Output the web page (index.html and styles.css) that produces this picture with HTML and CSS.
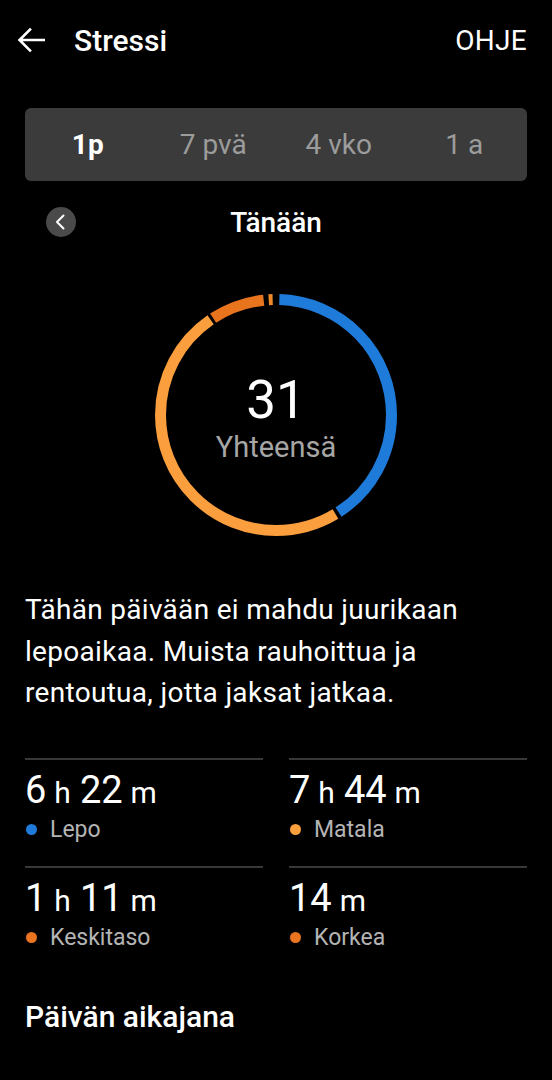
FILE: index.html
```html
<!DOCTYPE html>
<html lang="fi">
<head>
<meta charset="UTF-8" />
<meta name="viewport" content="width=device-width, initial-scale=1.0">
<title>Stressi</title>
<link rel="stylesheet" href="styles.css">
</head>
<body>
  <div class="topbar">
    <button class="back" aria-label="Takaisin">
      <svg width="28" height="26" viewBox="0 0 28 26">
        <path d="M27 13H3M13 2.5L2.5 13 13 23.5" fill="none" stroke="#fff" stroke-width="2.6" stroke-linecap="square"/>
      </svg>
    </button>
    <h1 class="title">Stressi</h1>
    <span class="help">OHJE</span>
  </div>

  <div class="tabs">
    <span class="tab active">1p</span>
    <span class="tab">7 pvä</span>
    <span class="tab">4 vko</span>
    <span class="tab">1 a</span>
  </div>

  <div class="daterow">
    <button class="prev" aria-label="Edellinen">
      <svg width="30" height="30" viewBox="0 0 30 30">
        <path d="M17.5 8.5L11 15l6.5 6.5" fill="none" stroke="#fff" stroke-width="2" stroke-linecap="round" stroke-linejoin="round"/>
      </svg>
    </button>
    <span class="date">Tänään</span>
  </div>

  <div class="ring">
    <svg width="252" height="252" viewBox="0 0 252 252">
      <g transform="rotate(-90 126 126)" fill="none" stroke-width="11">
        <!-- angles from top, clockwise -->
        <circle cx="126" cy="126" r="115.5" pathLength="360" stroke="#1f7bd9" stroke-dasharray="145.5 360" stroke-dashoffset="-1.7"/>
        <circle cx="126" cy="126" r="115.5" pathLength="360" stroke="#fb9e3d" stroke-dasharray="176.5 360" stroke-dashoffset="-149"/>
        <circle cx="126" cy="126" r="115.5" pathLength="360" stroke="#e9741e" stroke-dasharray="26.8 360" stroke-dashoffset="-327"/>
        <circle cx="126" cy="126" r="115.5" pathLength="360" stroke="#ef8a2a" stroke-dasharray="2 360" stroke-dashoffset="-356.3"/>
      </g>
    </svg>
    <div class="ring-label">
      <span class="total">31</span>
      <span class="total-name">Yhteensä</span>
    </div>
  </div>

  <p class="advice">Tähän päivään ei mahdu juurikaan lepoaikaa. Muista rauhoittua ja rentoutua, jotta jaksat jatkaa.</p>

  <div class="stats">
    <div class="stat">
      <div class="value">6<small>h</small>22<small>m</small></div>
      <div class="label"><i class="dot rest"></i>Lepo</div>
    </div>
    <div class="stat">
      <div class="value">7<small>h</small>44<small>m</small></div>
      <div class="label"><i class="dot low"></i>Matala</div>
    </div>
    <div class="stat">
      <div class="value">1<small>h</small>11<small>m</small></div>
      <div class="label"><i class="dot mid"></i>Keskitaso</div>
    </div>
    <div class="stat">
      <div class="value">14<small>m</small></div>
      <div class="label"><i class="dot mid"></i>Korkea</div>
    </div>
  </div>

  <h2 class="section">Päivän aikajana</h2>
</body>
</html>
```

FILE: styles.css
```css
body {
  margin: 0;
  background: #000;
  color: #fff;
  font-family: Roboto, "Noto Sans", sans-serif;
}
button {
  background: none;
  border: none;
  padding: 0;
  cursor: pointer;
}

.topbar {
  display: flex;
  align-items: center;
  height: 80px;
  padding: 0 25px 0 17px;
}
.back {
  display: flex;
  width: 28px;
  height: 26px;
}
.title {
  margin: 0 0 0 29px;
  font-size: 30px;
  font-weight: 500;
  flex: 1;
}
.help {
  font-size: 28px;
  letter-spacing: 0.3px;
}

.tabs {
  display: grid;
  grid-template-columns: repeat(4, 1fr);
  align-items: center;
  height: 73px;
  margin: 28px 25px 0;
  background: #3b3b3b;
  border-radius: 6px;
}
.tab {
  text-align: center;
  font-size: 28px;
  color: #9c9c9c;
}
.tab.active {
  color: #fff;
  font-weight: 700;
}

.daterow {
  display: grid;
  grid-template-columns: 1fr auto 1fr;
  align-items: center;
  height: 54px;
  margin: 14px 25px 0;
}
.prev {
  width: 30px;
  height: 30px;
  margin-left: 21px;
  border-radius: 50%;
  background: #4a4a4a;
  display: flex;
}
.date {
  font-size: 28px;
  font-weight: 500;
}

.ring {
  display: grid;
  place-items: center;
  width: 252px;
  height: 252px;
  margin: 40px auto 0;
}
.ring > * {
  grid-area: 1 / 1;
}
.ring-label {
  display: flex;
  flex-direction: column;
  align-items: center;
  margin-top: 6px;
}
.total {
  font-size: 53px;
  line-height: 58px;
}
.total-name {
  font-size: 29px;
  line-height: 36px;
  color: #a6a6a6;
}

.advice {
  margin: 48px 25px 0;
  font-size: 28px;
  letter-spacing: 0.3px;
  line-height: 41.5px;
}

.stats {
  display: grid;
  grid-template-columns: 1fr 1fr;
  column-gap: 26px;
  margin: 44px 25px 0;
}
.stat {
  height: 108px;
  padding-top: 8px;
  box-sizing: border-box;
  border-top: 2px solid #383838;
}
.value {
  font-size: 38px;
  line-height: 44px;
}
.value small {
  font-size: 30px;
  margin: 0 9px 0 8px;
}
.label {
  display: flex;
  align-items: center;
  font-size: 23px;
  line-height: 30px;
  color: #b4b4b4;
}
.dot {
  width: 11px;
  height: 11px;
  border-radius: 50%;
  margin: 0 13px 0 1px;
}
.dot.rest { background: #1f7bd9; }
.dot.low { background: #fb9e3d; }
.dot.mid { background: #ea7420; }

.section {
  margin: 26px 25px 0;
  font-size: 30px;
  font-weight: 500;
  line-height: 34px;
}
```
